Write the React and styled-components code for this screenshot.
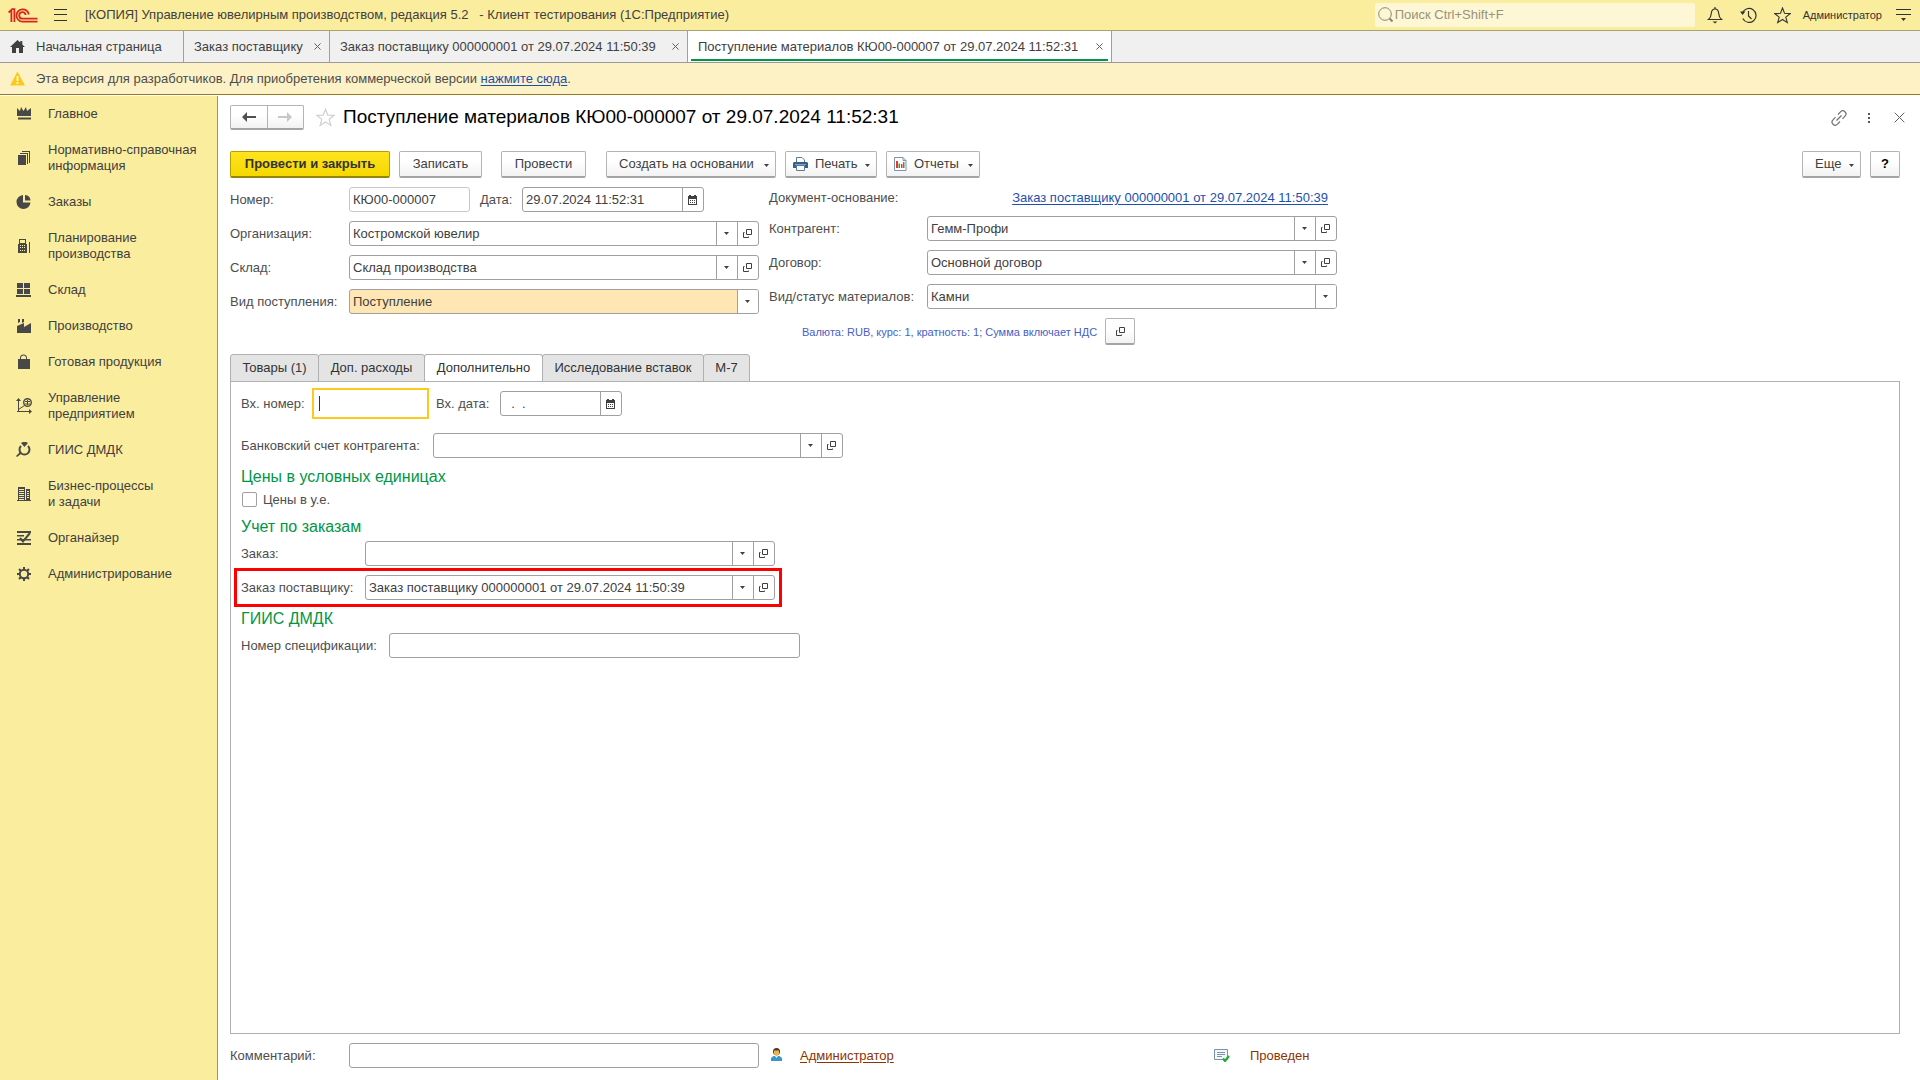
import React from 'react';
import styled, { createGlobalStyle, css } from 'styled-components';

const colors = {
  yellow: '#fbed9e',
  notice: '#fdf2c6',
  text: '#404040',
  label: '#4d4d4d',
  border: '#a0a0a0',
  green: '#009646',
  link: '#1d4fae',
  brown: '#8c3400',
};

const GlobalStyle = createGlobalStyle`
  * {
    box-sizing: border-box;
  }
  body {
    margin: 0;
    background: #fff;
    color: ${colors.text};
    font: 13px/16px 'Liberation Sans', Arial, sans-serif;
  }
  button, input, select {
    font: inherit;
    color: inherit;
    margin: 0;
  }
  svg {
    display: block;
    flex: none;
  }
`;

const Page = styled.div`
  display: flex;
  flex-direction: column;
  min-height: 100vh;
`;

const TitleBar = styled.header`
  display: flex;
  align-items: center;
  height: 31px;
  padding: 0 9px 0 8px;
  background: ${colors.yellow};
  border-bottom: 1px solid #aba36c;
`;

const PlainButton = styled.button`
  display: flex;
  align-items: center;
  justify-content: center;
  padding: 0;
  border: 0;
  background: none;
  cursor: pointer;
`;

const MenuButton = styled(PlainButton)`
  width: 16px;
  margin: 0 17px 0 14px;
`;

const AppTitle = styled.div`
  flex: 1;
  white-space: pre;
`;

const Search = styled.label`
  display: flex;
  align-items: center;
  width: 320px;
  height: 24px;
  padding: 0 0 0 3px;
  margin-right: 11px;
  border-radius: 2px;
  background: #fdf7d6;
`;

const SearchInput = styled.input`
  flex: 1;
  min-width: 0;
  padding: 0 2px;
  border: 0;
  outline: 0;
  background: none;
  &::placeholder {
    color: #98937a;
    opacity: 1;
  }
`;

const BarButton = styled(PlainButton)`
  width: 18px;
  height: 24px;
  margin-right: 16px;
`;

const UserButton = styled(PlainButton)`
  margin: 0 14px 0 -5px;
  color: #333;
  font-size: 11px;
`;

const WindowTabs = styled.nav`
  display: flex;
  height: 32px;
  background: #f0f0f0;
  border-bottom: 1px solid #999;
`;

const WindowTab = styled.div`
  display: flex;
  align-items: center;
  min-width: ${({ $width }) => $width}px;
  padding: 0 8px 0 10px;
  border-right: 1px solid #a0a0a0;
  ${({ $active }) => $active && css`
    background: linear-gradient(${colors.green}, ${colors.green}) center bottom 1px / calc(100% - 6px) 2px no-repeat #fff;
  `}
`;

const HomeTitle = styled(PlainButton)`
  margin-left: 11px;
  white-space: nowrap;
`;

const TabTitle = styled(PlainButton)`
  margin-right: auto;
  white-space: nowrap;
`;

const Notice = styled.div`
  display: flex;
  align-items: center;
  height: 32px;
  padding-left: 10px;
  color: ${colors.label};
  background: ${colors.notice};
  border-bottom: 1px solid #96781e;
`;

const NoticeText = styled.span`
  margin-left: 11px;
`;

const Link = styled.a`
  color: ${({ $brown }) => ($brown ? colors.brown : colors.link)};
  text-decoration: underline;
  text-underline-offset: 2px;
`;

const Body = styled.div`
  display: flex;
  flex: 1;
  margin-top: 1px;
`;

const Sidebar = styled.nav`
  flex: none;
  width: 218px;
  background: ${colors.yellow};
  border-right: 1px solid #98936a;
`;

const Section = styled(PlainButton)`
  justify-content: flex-start;
  gap: 16px;
  width: 100%;
  padding: 10px 0 10px 16px;
  text-align: left;
  white-space: pre-line;
`;

const Main = styled.main`
  display: flex;
  flex: 1;
  flex-direction: column;
  min-width: 0;
  padding: 9px 20px 12px 12px;
`;

const FormHeader = styled.div`
  display: flex;
  align-items: center;
  height: 25px;
`;

const raised = css`
  border: 1px solid #b4b4b4;
  border-bottom: 2px solid #a4a4a4;
  border-radius: 2px;
  background: linear-gradient(#fff 40%, #f2f2f2);
`;

const History = styled.div`
  display: flex;
  width: 74px;
  height: 25px;
  margin-right: 12px;
  ${raised}
`;

const HistoryButton = styled(PlainButton)`
  flex: 1;
  & + & {
    border-left: 1px solid #b4b4b4;
  }
`;

const FormTitle = styled.h1`
  flex: 1;
  margin: 0 0 2px 8px;
  color: #000;
  font-size: 19px;
  line-height: 22px;
  font-weight: normal;
`;

const HeaderActions = styled.div`
  display: flex;
  align-items: center;
  gap: 12px;
  margin-right: -8px;
`;

const HeaderButton = styled(PlainButton)`
  width: 18px;
  height: 24px;
`;

const Toolbar = styled.div`
  display: flex;
  margin: 21px 0 9px;
`;

const Button = styled.button`
  display: flex;
  align-items: center;
  justify-content: ${({ $menu }) => ($menu ? 'flex-start' : 'center')};
  gap: 7px;
  min-width: ${({ $width }) => $width || 30}px;
  height: 27px;
  padding: ${({ $menu, $icon }) => ($menu ? `0 6px 0 ${$icon ? 7 : 12}px` : '0')};
  margin-left: ${({ $gap }) => $gap ?? 9}px;
  white-space: nowrap;
  cursor: pointer;
  ${raised}
  ${({ $primary }) => $primary && css`
    border-color: #b59f00;
    border-bottom-color: #968400;
    background: linear-gradient(#ffe41f, #f5d800);
    color: #333;
    font-weight: bold;
  `}
`;

const HelpButton = styled(Button)`
  color: #000;
  font-weight: bold;
`;

const Spacer = styled.div`
  flex: 1;
`;

const Columns = styled.div`
  display: flex;
  gap: 10px;
  margin-bottom: 9px;
`;

const Column = styled.div`
  display: flex;
  flex-direction: column;
  gap: 9px;
`;

const Row = styled.div`
  display: flex;
  align-items: center;
  width: fit-content;
`;

const BaseRow = styled.div`
  display: flex;
  justify-content: space-between;
  height: 20px;
  padding-right: 9px;
  color: ${colors.label};
  line-height: 22px;
`;

const CurrencyRow = styled.div`
  display: flex;
  align-items: center;
  padding-left: 33px;
`;

const CurrencyText = styled.span`
  color: #4660c4;
  font-size: 11px;
`;

const Label = styled.label`
  flex: none;
  width: ${({ $width }) => $width}px;
  color: ${colors.label};
  white-space: nowrap;
`;

const DateLabel = styled(Label)`
  margin-left: 10px;
`;

const FieldBox = styled.div`
  display: flex;
  width: ${({ $width }) => $width}px;
  height: 25px;
  overflow: hidden;
  border: 1px solid ${({ $readOnly }) => ($readOnly ? '#c8c8c8' : colors.border)};
  border-radius: 3px;
  background: #fff;
`;

const TextInput = styled.input`
  flex: 1;
  min-width: 0;
  padding: 0 3px;
  border: 0;
  outline: 0;
  background: none;
  white-space: pre;
`;

const FieldButton = styled(PlainButton)`
  flex: none;
  width: 21px;
  padding-right: 1px;
  border-left: 1px solid ${colors.border};
`;

const SelectBox = styled(FieldBox)`
  display: grid;
  background: ${({ $filled }) => ($filled ? '#ffe6b3' : '#fff')};
`;

const Select = styled.select`
  grid-area: 1 / 1;
  padding: 0 24px 0 3px;
  border: 0;
  outline: 0;
  background: none;
  appearance: none;
`;

const SelectArrow = styled.span`
  display: flex;
  grid-area: 1 / 1;
  align-items: center;
  justify-content: center;
  justify-self: end;
  width: 21px;
  padding-right: 1px;
  border-left: 1px solid ${colors.border};
  background: #fff;
  pointer-events: none;
`;

const ActiveInput = styled.input`
  width: 117px;
  height: 31px;
  margin-right: 7px;
  padding: 0 6px;
  border: 2px solid #fbca1c;
  outline: 0;
  background: linear-gradient(#333, #333) 5px center / 1px 15px no-repeat #fff;
  caret-color: transparent;
`;

const FormTabs = styled.div`
  display: flex;
  height: 28px;
  margin-bottom: -1px;
`;

const FormTab = styled.button`
  min-width: ${({ $width }) => $width}px;
  padding: 0 10px;
  margin-right: -1px;
  border: 1px solid #b0b0b0;
  border-bottom-color: ${({ $active }) => ($active ? '#fff' : '#b0b0b0')};
  border-radius: 3px 3px 0 0;
  background: ${({ $active }) => ($active ? '#fff' : '#e4e4e4')};
  color: #333;
  white-space: nowrap;
  cursor: pointer;
`;

const Panel = styled.section`
  flex: 1;
  padding: 6px 10px;
  border: 1px solid #b0b0b0;
`;

const PanelRow = styled(Row)`
  margin-top: ${({ $top }) => $top || 0}px;
`;

const MarkedRow = styled(PanelRow)`
  position: relative;
  &::after {
    content: '';
    position: absolute;
    inset: -7px;
    border: 3px solid #f00;
    pointer-events: none;
  }
`;

const GroupTitle = styled.h2`
  margin: 9px 0 4px;
  color: ${colors.green};
  font-size: 16px;
  line-height: 20px;
  font-weight: normal;
`;

const CheckLabel = styled.label`
  display: flex;
  align-items: center;
  gap: 6px;
  width: fit-content;
  height: 17px;
  padding-left: 1px;
  color: ${colors.label};
`;

const CheckBox = styled.input`
  width: 15px;
  height: 15px;
  border: 1px solid ${colors.border};
  border-radius: 2px;
  background: #fff;
  appearance: none;
`;

const Footer = styled.footer`
  display: flex;
  align-items: center;
  margin-top: 9px;
`;

const Author = styled.div`
  display: flex;
  gap: 18px;
  width: 443px;
  padding-left: 12px;
`;

const Status = styled.div`
  display: flex;
  align-items: center;
  gap: 20px;
  margin-left: 12px;
  color: ${colors.brown};
`;

const Caret = () => (
  <svg width="5" height="3" viewBox="0 0 5 3">
    <path d="M0 0h5L2.5 3z" fill="#404040" />
  </svg>
);

const CaretBox = styled.span`
  margin-left: auto;
  padding-top: 2px;
`;

const ButtonCaret = () => <CaretBox><Caret /></CaretBox>;

const OpenIcon = () => (
  <svg width="9" height="9" viewBox="0 0 9 9" fill="none" stroke="#404040">
    <path d="M3.5 .5h5v5h-5zM1.5 3.5h-1v5h5v-1" />
  </svg>
);

const CalendarIcon = () => (
  <svg width="9" height="10" viewBox="0 0 9 10">
    <path d="M0 1h1V0h2v1h3V0h2v1h1v9H0zM1 4v5h7V4z" fill="#404040" fillRule="evenodd" />
    <path d="M2 5h1v1H2zM4 5h1v1H4zM6 5h1v1H6zM2 7h1v1H2zM4 7h1v1H4zM6 7h1v1H6z" fill="#404040" />
  </svg>
);

const CloseIcon = ({ size = 7 }) => (
  <svg width={size} height={size} viewBox="0 0 8 8" stroke="#606060" fill="none">
    <path d="M.5 .5l7 7M7.5 .5l-7 7" vectorEffect="non-scaling-stroke" />
  </svg>
);

const Logo = () => (
  <svg width="30" height="15" viewBox="0 0 30 15" fill="none" stroke="#d9251c" strokeWidth="1.8">
    <path d="M.6 4.5L3.4 2v12M3.4 1.2h3V14" />
    <path d="M20.8 6.5A6.2 6.2 0 1 0 14.5 13.7H29.5" />
    <path d="M17.6 7A3.2 3.2 0 1 0 14.5 10.6H29.5" />
  </svg>
);

const HamburgerIcon = () => (
  <svg width="15" height="12" viewBox="0 0 15 12" stroke="#333">
    <path d="M1 .5h13M1 5.5h13M1 11.5h13" />
  </svg>
);

const SearchIcon = () => (
  <svg width="15" height="16" viewBox="0 0 15 16" fill="none" stroke="#8d8870">
    <circle cx="7" cy="7" r="6.3" />
    <path d="M11.5 11.5l3 3" strokeWidth="2" />
  </svg>
);

const BellIcon = () => (
  <svg width="16" height="17" viewBox="0 0 16 17" fill="none" stroke="#333" strokeWidth="1.2">
    <path d="M1.5 12.5c2-1.5 2.5-2.8 2.8-6C4.5 3.5 6 2 8 2s3.500 1.500 3.700 4.500c.3 3.200.8 4.500 2.800 6z" />
    <path d="M8 0v2" />
    <path d="M5.5 14.5h5L8 16.5z" fill="#333" stroke="none" />
  </svg>
);

const ClockIcon = () => (
  <svg width="17" height="17" viewBox="0 0 17 17" fill="none" stroke="#333" strokeWidth="1.2">
    <path d="M2.5 6A7 7 0 1 1 2.8 11.5" />
    <path d="M8.5 4v5l3 3" />
    <path d="M0 4.500h5.500L2.500 8z" fill="#333" stroke="none" />
  </svg>
);

const StarIcon = ({ size = 17, color = '#333' }) => (
  <svg width={size} height={size} viewBox="0 0 17 17" fill="none" stroke={color} strokeWidth="1.1">
    <path d="M8.5 1l2 5.3 5.7 .3-4.4 3.5 1.5 5.5-4.8-3.1-4.8 3.1 1.5-5.5L.8 6.600l5.700-.3z" />
  </svg>
);

const SettingsIcon = () => (
  <svg width="15" height="14" viewBox="0 0 15 14">
    <path d="M0 1h15v1H0zM0 6h15v1H0zM5 10h5l-2.500 3z" fill="#333" />
  </svg>
);

const HomeIcon = () => (
  <svg width="15" height="13" viewBox="0 0 15 13">
    <path d="M7.500 0l2.800 2.600V1h2v3.500L15 7h-2v6H9V8H6v5H2V7H0z" fill="#404040" />
  </svg>
);

const WarningIcon = () => (
  <svg width="15" height="15" viewBox="0 0 15 15">
    <path d="M7.5 .5L15 14.500H0z" fill="#fbc91d" />
    <path d="M6.700 5h1.600v5H6.700zM6.700 11h1.600v2H6.700z" fill="#fff" />
  </svg>
);

const ArrowIcon = ({ color, flip }) => (
  <svg width="14" height="10" viewBox="0 0 14 10">
    <path
      d={flip ? 'M14 5L9 0v4H0v2h9v4z' : 'M0 5l5-5v4h9v2H5v4z'}
      fill={color}
    />
  </svg>
);

const LinkIcon = () => (
  <svg width="16" height="16" viewBox="0 0 16 16" fill="none" stroke="#707070" strokeWidth="1.2">
    <path d="M5.5 10.5l5-5" />
    <path d="M7 4.500l2.500-2.700a3 3 0 0 1 4.500 4.400L11.500 8.800" />
    <path d="M9 11.500l-2.500 2.700A3 3 0 0 1 2 9.800L4.500 7.200" />
  </svg>
);

const DotsIcon = () => (
  <svg width="2" height="10" viewBox="0 0 2 10">
    <path d="M0 0h2v2H0zM0 4h2v2H0zM0 8h2v2H0z" fill="#555" />
  </svg>
);

const PrinterIcon = () => (
  <svg width="15" height="14" viewBox="0 0 15 14">
    <path d="M3.5 5V.5h5.500l2.500 2.500v2" fill="#fff" stroke="#5b7a95" />
    <path d="M1 5h13l1 1v5H0V6z" fill="#34618c" />
    <path d="M2 7.500h11" stroke="#7fa3c4" />
    <path d="M3.5 8.5h8v5h-8z" fill="#fff" stroke="#5b7a95" />
  </svg>
);

const ReportIcon = () => (
  <svg width="13" height="14" viewBox="0 0 13 14">
    <path d="M.5 .5h8.500l3 3v10H.5z" fill="#fff" stroke="#7d93a8" />
    <path d="M9 .5v3h3" fill="none" stroke="#7d93a8" />
    <path d="M2 4h2v7H2zM7 7h1.500v4H7z" fill="#e03a28" />
    <path d="M4.5 6.500h1.500V11H4.500zM9 5h1.500v6H9z" fill="#3d9c45" />
  </svg>
);

const UserIcon = () => (
  <svg width="11" height="13" viewBox="0 0 11 13">
    <circle cx="5.5" cy="3.500" r="3.500" fill="#4a3a2a" />
    <path d="M3 2.500h5v3.500L5.500 8.500 3 6z" fill="#f2b04c" />
    <path d="M0 13v-3l2.500-2h1.500l1.500 2L7 8h1.500L11 10v3z" fill="#3a97cc" />
  </svg>
);

const PostedIcon = () => (
  <svg width="16" height="13" viewBox="0 0 16 13">
    <path d="M.5 .5h13v10H.5z" fill="#f4f7fa" stroke="#7d93a8" />
    <path d="M3 3.500h8M3 5.500h8M3 7.500h5" stroke="#7d93a8" />
    <path d="M9 9.500l2 2.500 4-5" fill="none" stroke="#23a63a" strokeWidth="2.200" />
  </svg>
);

const sectionIcons = {
  crown: <path d="M1 2l3 3 1-4 2.500 4L10 1l1 4 4-3v8H1zM2 11.500h13v2H2z" />,
  copies: <path d="M2 5h8v10H2zM4 3h8v11h-1V4H4zM6 1h8v12h-1V2H6z" />,
  pie: <path d="M7 1v7.500h7.500A7 7 0 1 1 7 1zM9 1a6 6 0 0 1 5.500 5.500H9z" />,
  calculator: (
    <path
      fillRule="evenodd"
      d="M2 6h1V1h7v5h1v9H2zM4 2v3h5V2zM4 7v1h1V7zM6 7v1h1V7zM8 7v1h1V7zM4 9v1h1V9zM6 9v1h1V9zM8 9v1h1V9zM4 12v1h1v-1zM6 12v1h1v-1zM8 12v1h1v-1zM13 4h1v11h-1z"
    />
  ),
  boxes: <path d="M1 1h6v5H1zM8 1h6v5H8zM1 7h6v5H1zM8 7h6v5H8zM0 13h15v2H0z" />,
  factory: <path d="M2 1h2v3L2 5zM6 1h2v3L6 5zM1 8l7-3v4l7-4v10H1z" />,
  bag: <path d="M2 5h2V4a3.500 3.500 0 0 1 7 0v1h3v10H2zM5 5h5V4a2.500 2.500 0 0 0-5 0z" />,
  chart: (
    <>
      <path d="M2.5 1v12.500M1 13.500h13M2.500 11.500l6-4" fill="none" stroke="#484848" />
      <path d="M0 3l2.500-3L5 3zM13 11l3 2.500-3 2.500z" />
      <circle cx="11.500" cy="4.500" r="3.800" fill="none" stroke="#484848" strokeWidth="1.400" />
      <path d="M9 3h2v1H9zM12 3h2v1h-2zM9 5.500h2v1H9zM12 5.500h2v1h-2zM11 2h1v5h-1z" />
    </>
  ),
  ring: (
    <>
      <path d="M5 1l2-1h3l2 1-3.500 4z" />
      <path d="M5 4a5 5 0 1 0 7 0" fill="none" stroke="#484848" strokeWidth="2" />
      <path d="M0 14l4-4 1.500 1.500L1 15z" />
    </>
  ),
  building: (
    <path
      fillRule="evenodd"
      d="M2 1h7v13h1V3h4v11h1v1H1v-1h1zM3 3v1h5V3zM3 5v1h5V5zM3 7v1h5V7zM3 9v1h5V9zM3 11v1h5v-1zM3 13v1h5v-1zM11 5v1h2V5zM11 7v1h2V7zM11 9v1h2V9zM11 11v1h2v-1z"
    />
  ),
  organizer: (
    <>
      <path d="M1 1h14v2H1zM1 5h7v1.500H1zM1 9h14v1.500H1zM1 13h14v2H1z" />
      <path d="M4 8l3 3.500L14 3" fill="none" stroke="#484848" strokeWidth="2" />
    </>
  ),
  gear: (
    <>
      <circle cx="8" cy="8" r="4.200" fill="none" stroke="#484848" strokeWidth="2" />
      <path
        d="M8 1v3M8 12v3M1 8h3M12 8h3M3 3l2 2M11 11l2 2M13 3l-2 2M5 11l-2 2"
        stroke="#484848"
        strokeWidth="2"
      />
    </>
  ),
};

const sections = [
  { icon: 'crown', title: 'Главное' },
  { icon: 'copies', title: 'Нормативно-справочная\nинформация' },
  { icon: 'pie', title: 'Заказы' },
  { icon: 'calculator', title: 'Планирование\nпроизводства' },
  { icon: 'boxes', title: 'Склад' },
  { icon: 'factory', title: 'Производство' },
  { icon: 'bag', title: 'Готовая продукция' },
  { icon: 'chart', title: 'Управление\nпредприятием' },
  { icon: 'ring', title: 'ГИИС ДМДК' },
  { icon: 'building', title: 'Бизнес-процессы\nи задачи' },
  { icon: 'organizer', title: 'Органайзер' },
  { icon: 'gear', title: 'Администрирование' },
];

const windows = [
  { title: 'Заказ поставщику', width: 146 },
  { title: 'Заказ поставщику 000000001 от 29.07.2024 11:50:39', width: 358 },
  { title: 'Поступление материалов КЮ00-000007 от 29.07.2024 11:52:31', width: 424, active: true },
];

const formTabs = [
  { title: 'Товары (1)', width: 89 },
  { title: 'Доп. расходы', width: 107 },
  { title: 'Дополнительно', width: 119 },
  { title: 'Исследование вставок', width: 162 },
  { title: 'М-7', width: 47 },
];

const RefField = ({ id, value = '', width = 410 }) => (
  <FieldBox $width={width}>
    <TextInput id={id} defaultValue={value} />
    <FieldButton aria-label="Выбрать из списка"><Caret /></FieldButton>
    <FieldButton aria-label="Открыть"><OpenIcon /></FieldButton>
  </FieldBox>
);

const SelectField = ({ id, value, filled }) => (
  <SelectBox $width={410} $filled={filled}>
    <Select id={id} defaultValue={value}>
      <option>{value}</option>
    </Select>
    <SelectArrow><Caret /></SelectArrow>
  </SelectBox>
);

const DateField = ({ id, value, width }) => (
  <FieldBox $width={width}>
    <TextInput id={id} defaultValue={value} />
    <FieldButton aria-label="Календарь"><CalendarIcon /></FieldButton>
  </FieldBox>
);

const App = () => (
  <>
    <GlobalStyle />
    <Page>
      <TitleBar>
        <Logo />
        <MenuButton aria-label="Меню"><HamburgerIcon /></MenuButton>
        <AppTitle>
          {'[КОПИЯ] Управление ювелирным производством, редакция 5.2   - Клиент тестирования (1С:Предприятие)'}
        </AppTitle>
        <Search>
          <SearchIcon />
          <SearchInput aria-label="Поиск" placeholder="Поиск Ctrl+Shift+F" />
        </Search>
        <BarButton aria-label="Уведомления"><BellIcon /></BarButton>
        <BarButton aria-label="История"><ClockIcon /></BarButton>
        <BarButton aria-label="Избранное"><StarIcon /></BarButton>
        <UserButton>Администратор</UserButton>
        <PlainButton aria-label="Настройки"><SettingsIcon /></PlainButton>
      </TitleBar>

      <WindowTabs>
        <WindowTab $width={184}>
          <HomeIcon />
          <HomeTitle>Начальная страница</HomeTitle>
        </WindowTab>
        {windows.map(({ title, width, active }) => (
          <WindowTab key={title} $width={width} $active={active}>
            <TabTitle>{title}</TabTitle>
            <PlainButton aria-label="Закрыть"><CloseIcon /></PlainButton>
          </WindowTab>
        ))}
      </WindowTabs>

      <Notice>
        <WarningIcon />
        <NoticeText>
          Эта версия для разработчиков. Для приобретения коммерческой версии <Link href="#buy">нажмите сюда</Link>.
        </NoticeText>
      </Notice>

      <Body>
        <Sidebar>
          {sections.map(({ icon, title }) => (
            <Section key={icon}>
              <svg width="16" height="16" viewBox="0 0 16 16" fill="#484848">{sectionIcons[icon]}</svg>
              {title}
            </Section>
          ))}
        </Sidebar>

        <Main>
          <FormHeader>
            <History>
              <HistoryButton aria-label="Назад"><ArrowIcon color="#505050" /></HistoryButton>
              <HistoryButton aria-label="Вперед"><ArrowIcon color="#c8c8c8" flip /></HistoryButton>
            </History>
            <PlainButton aria-label="В избранное"><StarIcon size={19} color="#d0d0d0" /></PlainButton>
            <FormTitle>Поступление материалов КЮ00-000007 от 29.07.2024 11:52:31</FormTitle>
            <HeaderActions>
              <HeaderButton aria-label="Ссылка"><LinkIcon /></HeaderButton>
              <HeaderButton aria-label="Действия"><DotsIcon /></HeaderButton>
              <HeaderButton aria-label="Закрыть форму"><CloseIcon size={11} /></HeaderButton>
            </HeaderActions>
          </FormHeader>

          <Toolbar>
            <Button $primary $width={160} $gap={0}>Провести и закрыть</Button>
            <Button $width={83}>Записать</Button>
            <Button $width={85} $gap={19}>Провести</Button>
            <Button $menu $width={170} $gap={20}>Создать на основании <ButtonCaret /></Button>
            <Button $menu $icon $width={92}><PrinterIcon /> Печать <ButtonCaret /></Button>
            <Button $menu $icon $width={94}><ReportIcon /> Отчеты <ButtonCaret /></Button>
            <Spacer />
            <Button $menu $width={59}>Еще <ButtonCaret /></Button>
            <HelpButton>?</HelpButton>
          </Toolbar>

          <Columns>
            <Column>
              <Row>
                <Label htmlFor="number" $width={119}>Номер:</Label>
                <FieldBox $width={121} $readOnly>
                  <TextInput id="number" defaultValue="КЮ00-000007" readOnly />
                </FieldBox>
                <DateLabel htmlFor="date" $width={42}>Дата:</DateLabel>
                <DateField id="date" value="29.07.2024 11:52:31" width={182} />
              </Row>
              <Row>
                <Label htmlFor="organization" $width={119}>Организация:</Label>
                <RefField id="organization" value="Костромской ювелир" />
              </Row>
              <Row>
                <Label htmlFor="warehouse" $width={119}>Склад:</Label>
                <RefField id="warehouse" value="Склад производства" />
              </Row>
              <Row>
                <Label htmlFor="kind" $width={119}>Вид поступления:</Label>
                <SelectField id="kind" value="Поступление" filled />
              </Row>
            </Column>

            <Column>
              <BaseRow>
                <span>Документ-основание:</span>
                <Link href="#order">Заказ поставщику 000000001 от 29.07.2024 11:50:39</Link>
              </BaseRow>
              <Row>
                <Label htmlFor="partner" $width={158}>Контрагент:</Label>
                <RefField id="partner" value="Гемм-Профи" />
              </Row>
              <Row>
                <Label htmlFor="contract" $width={158}>Договор:</Label>
                <RefField id="contract" value="Основной договор" />
              </Row>
              <Row>
                <Label htmlFor="status" $width={158}>Вид/статус материалов:</Label>
                <SelectField id="status" value="Камни" />
              </Row>
              <CurrencyRow>
                <CurrencyText>Валюта: RUB, курс: 1, кратность: 1; Сумма включает НДС</CurrencyText>
                <Button $gap={8} aria-label="Цены и валюта"><OpenIcon /></Button>
              </CurrencyRow>
            </Column>
          </Columns>

          <FormTabs role="tablist">
            {formTabs.map(({ title, width }) => (
              <FormTab key={title} role="tab" $width={width} $active={title === 'Дополнительно'}>{title}</FormTab>
            ))}
          </FormTabs>

          <Panel>
            <PanelRow>
              <Label htmlFor="inNumber" $width={71}>Вх. номер:</Label>
              <ActiveInput id="inNumber" />
              <Label htmlFor="inDate" $width={64}>Вх. дата:</Label>
              <DateField id="inDate" value="  .  ." width={122} />
            </PanelRow>
            <PanelRow $top={14}>
              <Label htmlFor="account" $width={192}>Банковский счет контрагента:</Label>
              <RefField id="account" />
            </PanelRow>

            <GroupTitle>Цены в условных единицах</GroupTitle>
            <CheckLabel>
              <CheckBox type="checkbox" />
              Цены в у.е.
            </CheckLabel>

            <GroupTitle>Учет по заказам</GroupTitle>
            <PanelRow>
              <Label htmlFor="order" $width={124}>Заказ:</Label>
              <RefField id="order" />
            </PanelRow>
            <MarkedRow $top={9}>
              <Label htmlFor="supplierOrder" $width={124}>Заказ поставщику:</Label>
              <RefField id="supplierOrder" value="Заказ поставщику 000000001 от 29.07.2024 11:50:39" />
            </MarkedRow>

            <GroupTitle>ГИИС ДМДК</GroupTitle>
            <PanelRow>
              <Label htmlFor="spec" $width={148}>Номер спецификации:</Label>
              <FieldBox $width={411}><TextInput id="spec" /></FieldBox>
            </PanelRow>
          </Panel>

          <Footer>
            <Label htmlFor="comment" $width={119}>Комментарий:</Label>
            <FieldBox $width={410}><TextInput id="comment" /></FieldBox>
            <Author>
              <UserIcon />
              <Link $brown href="#user">Администратор</Link>
            </Author>
            <Status>
              <PostedIcon />
              Проведен
            </Status>
          </Footer>
        </Main>
      </Body>
    </Page>
  </>
);

export default App;
